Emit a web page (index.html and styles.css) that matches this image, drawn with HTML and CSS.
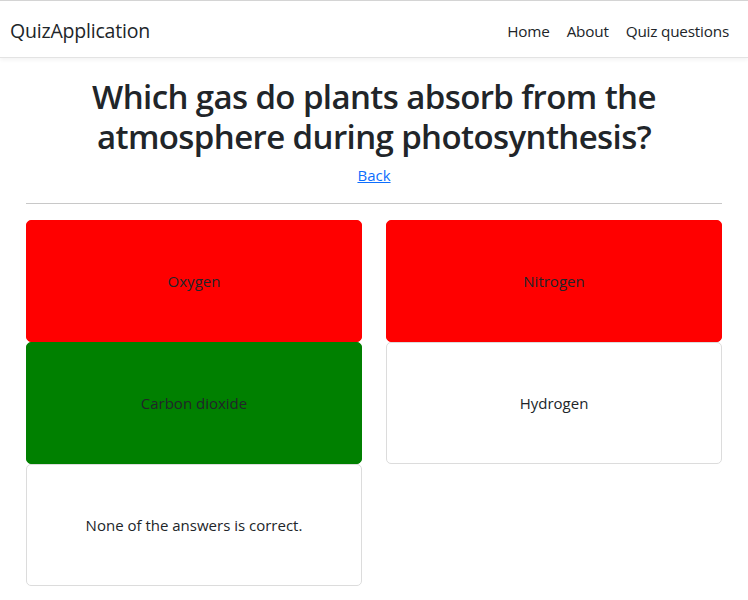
FILE: index.html
```html
<!DOCTYPE html>
<html>
<head>
<meta charset="utf-8">
<link rel="stylesheet" href="styles.css">
</head>
<body>
<header class="navbar">
  <a class="brand" href="#">QuizApplication</a>
  <nav class="nav">
    <a href="#">Home</a>
    <a href="#">About</a>
    <a href="#">Quiz questions</a>
  </nav>
</header>
<main class="main">
  <h1 class="title">Which gas do plants absorb from the atmosphere during photosynthesis?</h1>
  <div class="back"><a href="#">Back</a></div>
  <hr class="rule">
  <div class="answers">
    <div class="card wrong">Oxygen</div>
    <div class="card wrong">Nitrogen</div>
    <div class="card right">Carbon dioxide</div>
    <div class="card">Hydrogen</div>
    <div class="card">None of the answers is correct.</div>
  </div>
</main>
</body>
</html>
```
FILE: styles.css
```css
* { box-sizing: border-box; }
body {
  margin: 0;
  font-family: "Open Sans", "Noto Sans", sans-serif;
  color: #212529;
  background: #fff;
  font-size: 16px;
}
.navbar {
  display: flex;
  align-items: center;
  justify-content: space-between;
  height: 58px;
  border-top: 1px solid #d4d4d4;
  border-bottom: 1px solid #e3e3e3;
  box-shadow: 0 2px 4px rgba(0,0,0,0.05);
  padding: 3px 19px 0 10px;
}
.brand {
  font-size: 19.5px;
  color: #212529;
  text-decoration: none;
  letter-spacing: -0.2px;
}
.nav {
  display: flex;
  gap: 17px;
}
.nav a {
  font-size: 15.3px;
  color: #212529;
  text-decoration: none;
  letter-spacing: -0.2px;
}
.main {
  padding: 19px 26px 0;
}
.title {
  margin: 0 auto;
  max-width: 620px;
  text-align: center;
  font-size: 33px;
  font-weight: 600;
  line-height: 40px;
  letter-spacing: -0.6px;
}
.back {
  text-align: center;
  margin-top: 8px;
  font-size: 15px;
}
.back a { color: #0d6efd; }
.rule {
  border: 0;
  border-top: 1px solid #c8c8c8;
  margin: 18px 0 16px;
}
.answers {
  display: grid;
  grid-template-columns: 336px 336px;
  column-gap: 24px;
}
.card {
  height: 122px;
  display: flex;
  align-items: center;
  justify-content: center;
  border: 1px solid #dcdcdc;
  border-radius: 5px;
  font-size: 15px;
  background: #fff;
}
.card.wrong { background: #ff0000; border-color: #ff0000; }
.card.right { background: #008000; border-color: #008000; }
```
